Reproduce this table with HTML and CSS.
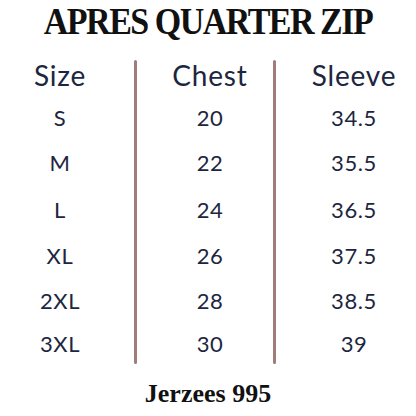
FILE: index.html
```html
<!DOCTYPE html>
<html>
<head>
<meta charset="utf-8">
<link rel="stylesheet" href="styles.css">
</head>
<body>
<div class="page">
  <h1 class="title">APRES QUARTER ZIP</h1>
  <div class="table">
    <div class="rule rule-a"></div>
    <div class="rule rule-b"></div>
    <div class="cell c1 head">Size</div>
    <div class="cell c2 head">Chest</div>
    <div class="cell c3 head">Sleeve</div>
    <div class="cell c1">S</div><div class="cell c2">20</div><div class="cell c3">34.5</div>
    <div class="cell c1">M</div><div class="cell c2">22</div><div class="cell c3">35.5</div>
    <div class="cell c1">L</div><div class="cell c2">24</div><div class="cell c3">36.5</div>
    <div class="cell c1">XL</div><div class="cell c2">26</div><div class="cell c3">37.5</div>
    <div class="cell c1">2XL</div><div class="cell c2">28</div><div class="cell c3">38.5</div>
    <div class="cell c1">3XL</div><div class="cell c2">30</div><div class="cell c3">39</div>
  </div>
  <div class="footer">Jerzees 995</div>
</div>
</body>
</html>
```
FILE: styles.css
```css
html, body {
  margin: 0;
  padding: 0;
  background: #ffffff;
}
.page {
  width: 416px;
  height: 416px;
  display: flex;
  flex-direction: column;
  align-items: center;
}
.title {
  margin: 0;
  padding-top: 4px;
  height: 56px;
  box-sizing: border-box;
  font-family: "Liberation Serif", serif;
  font-weight: bold;
  font-size: 34px;
  line-height: 38px;
  color: #111111;
  text-align: center;
  letter-spacing: -1.5px;
  transform: scaleY(1.14);
  transform-origin: 50% 60%;
}
.table {
  width: 416px;
  margin-top: 4px;
  display: grid;
  grid-template-columns: 134px 3px 136px 3px 140px;
  grid-template-rows: 36px 43px 47px 46px 46px 45px 41px;
  font-family: Lato, sans-serif;
  color: #1c2640;
}
.rule {
  grid-row: 1 / -1;
  background: #a27b7b;
  border-radius: 2px;
}
.rule-a { grid-column: 2; }
.rule-b { grid-column: 4; }
.cell {
  display: flex;
  align-items: center;
  justify-content: center;
  font-size: 22px;
  letter-spacing: 0.6px;
}
.head {
  font-size: 28px;
  letter-spacing: 0.8px;
  padding-bottom: 6px;
}
.c1 { grid-column: 1; padding-right: 14px; }
.c2 { grid-column: 3; padding-left: 10px; }
.c3 { grid-column: 5; padding-left: 16px; }
.footer {
  margin-top: 16px;
  font-family: "Liberation Serif", serif;
  font-weight: bold;
  font-size: 26px;
  line-height: 28px;
  color: #111111;
}
```
